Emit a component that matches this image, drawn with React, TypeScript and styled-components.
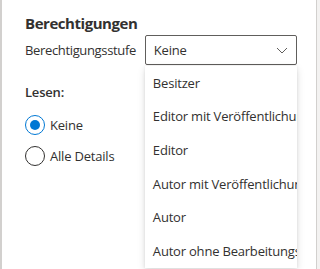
import React from "react";
import styled, { createGlobalStyle } from "styled-components";

const Global = createGlobalStyle`
  html, body { margin: 0; padding: 0; background: #fff; }
  body { font-family: "Open Sans", "Noto Sans", sans-serif; color: #323130; }
  * { box-sizing: border-box; }
`;

const Page = styled.div`
  width: 320px;
  height: 269px;
  display: flex;
  overflow: hidden;
  background: #fff;
`;

const LeftEdge = styled.div`
  width: 2px;
  background: #d2d0ce;
  flex: none;
`;

const Panel = styled.div`
  flex: 1;
  position: relative;
  padding: 12px 0 0 23px;
`;

const RightEdge = styled.div`
  width: 4px;
  flex: none;
  background: #f3f2f1;
  border-left: 1px solid #d2d0ce;
`;

const Title = styled.h2`
  margin: 0;
  font-size: 15px;
  font-weight: 700;
  letter-spacing: -0.45px;
  line-height: 22px;
  color: #323130;
`;

const FieldRow = styled.div`
  display: flex;
  align-items: center;
  margin-top: 1px;
  gap: 9px;
`;

const Label = styled.span`
  font-size: 13px;
  letter-spacing: -0.35px;
  line-height: 30px;
  color: #323130;
`;

const DropdownWrap = styled.div`
  position: relative;
  width: 152px;
`;

const DropdownBox = styled.div`
  height: 30px;
  border: 1px solid #605e5c;
  border-radius: 2px;
  display: flex;
  align-items: center;
  justify-content: space-between;
  padding: 0 8px 0 8px;
  font-size: 13px;
  letter-spacing: -0.2px;
`;

const Menu = styled.div`
  position: absolute;
  top: 31px;
  left: 0;
  width: 152px;
  background: #fff;
  box-shadow: 0 3px 8px rgba(0, 0, 0, 0.13), 0 0 3px rgba(0, 0, 0, 0.09);
  overflow: hidden;
`;

const MenuItem = styled.div`
  height: 33.6px;
  display: flex;
  align-items: center;
  padding-left: 8px;
  white-space: nowrap;
  font-size: 13px;
  letter-spacing: -0.2px;
  color: #323130;
`;

const Section = styled.div`
  margin-top: 17px;
`;

const SectionLabel = styled.div`
  font-size: 13px;
  font-weight: 600;
  letter-spacing: -0.2px;
  line-height: 20px;
`;

const RadioList = styled.div`
  display: flex;
  flex-direction: column;
  gap: 11px;
  margin-top: 13px;
`;

const RadioRow = styled.label`
  display: flex;
  align-items: center;
  gap: 5px;
  font-size: 13px;
  letter-spacing: -0.2px;
  line-height: 20px;
`;

const Circle = styled.span<{ $checked?: boolean }>`
  width: 20px;
  height: 20px;
  border-radius: 50%;
  border: 1px solid ${(p) => (p.$checked ? "#0078d4" : "#323130")};
  display: flex;
  align-items: center;
  justify-content: center;
  &::after {
    content: "";
    width: 10px;
    height: 10px;
    border-radius: 50%;
    background: ${(p) => (p.$checked ? "#0078d4" : "transparent")};
  }
`;

const Chevron = () => (
  <svg width="12" height="12" viewBox="0 0 12 12">
    <path d="M1 4 L6 9 L11 4" fill="none" stroke="#605e5c" strokeWidth="1" />
  </svg>
);

const items = [
  "Besitzer",
  "Editor mit Veröffentlichungsrechten",
  "Editor",
  "Autor mit Veröffentlichungsrechten",
  "Autor",
  "Autor ohne Bearbeitungsstatus",
];

export default function App() {
  return (
    <Page>
      <Global />
      <LeftEdge />
      <Panel>
        <Title>Berechtigungen</Title>
        <FieldRow>
          <Label>Berechtigungsstufe</Label>
          <DropdownWrap>
            <DropdownBox>
              <span>Keine</span>
              <Chevron />
            </DropdownBox>
            <Menu>
              {items.map((t) => (
                <MenuItem key={t}>{t}</MenuItem>
              ))}
            </Menu>
          </DropdownWrap>
        </FieldRow>
        <Section>
          <SectionLabel>Lesen:</SectionLabel>
          <RadioList>
            <RadioRow>
              <Circle $checked />
              Keine
            </RadioRow>
            <RadioRow>
              <Circle />
              Alle Details
            </RadioRow>
          </RadioList>
        </Section>
      </Panel>
      <RightEdge />
    </Page>
  );
}
